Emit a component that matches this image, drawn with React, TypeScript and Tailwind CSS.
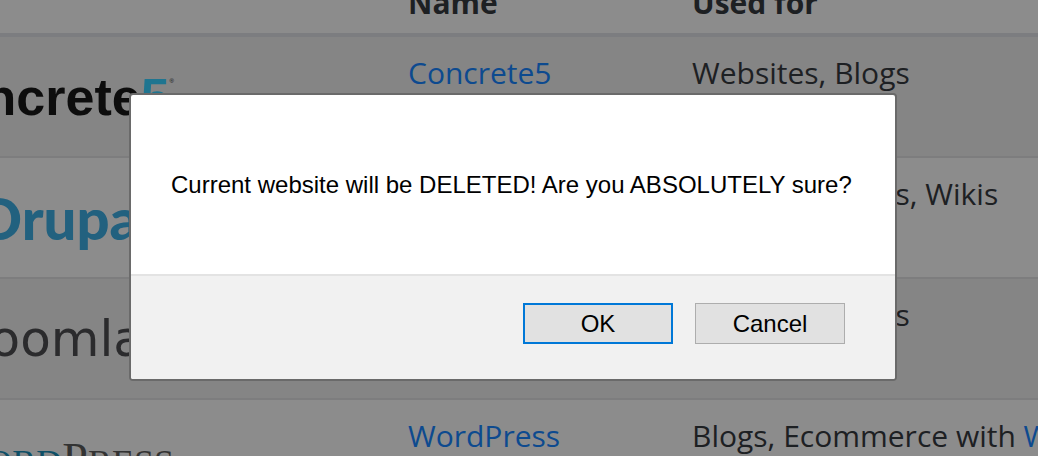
import type { ReactNode } from "react";

type Row = { id: string; logo: ReactNode; name: string; uses: ReactNode };

const linkClass = "text-[#0d4a8f]";

const rows: Row[] = [
  {
    id: "concrete5",
    logo: (
      <span className="flex w-[174px] justify-end font-['Liberation_Sans',sans-serif] text-[52px] font-bold text-[#0d0d0d]">
        <span>concrete</span>
        <span className="text-[#1f7590]">5</span>
        <span className="text-[6px] leading-7 font-normal">®</span>
      </span>
    ),
    name: "Concrete5",
    uses: "Websites, Blogs",
  },
  {
    id: "drupal",
    logo: (
      <span className="flex w-[154px] justify-end font-['Lato',sans-serif] text-[58px] font-black text-[#22617f]">
        Drupal
      </span>
    ),
    name: "Drupal",
    uses: "Websites, Blogs, Wikis",
  },
  {
    id: "joomla",
    logo: (
      <span className="flex w-[144px] justify-end font-['DejaVu_Sans',sans-serif] text-[50px] text-[#2b2b2d]">
        Joomla
      </span>
    ),
    name: "Joomla",
    uses: "Websites, Blogs",
  },
  {
    id: "wordpress",
    logo: (
      <span className="flex w-[174px] items-baseline justify-end pt-1 font-['Liberation_Serif',serif] text-[46px] text-[#333333]">
        <span className="text-[#0e4f66]">W</span>
        <span className="text-[36px] text-[#0e4f66]">ORD</span>
        <span>P</span>
        <span className="text-[36px]">RESS</span>
      </span>
    ),
    name: "WordPress",
    uses: (
      <>
        Blogs, Ecommerce with{" "}
        <a href="#woocommerce" className={linkClass}>
          WooCommerce
        </a>
      </>
    ),
  },
];

function SoftwareTable() {
  return (
    <table className="-mt-[35px] w-full table-fixed border-separate border-spacing-0 text-left text-[30px] leading-[48px] whitespace-nowrap text-[#1d2023]">
      <colgroup>
        <col className="w-[384px]" />
        <col className="w-[284px]" />
        <col />
      </colgroup>
      <thead>
        <tr>
          <th aria-label="Logo" className="border-b-4 border-[#7c7d80]" />
          <th className="border-b-4 border-[#7c7d80] px-6 pt-[14px] pb-[6px] font-bold">Name</th>
          <th className="border-b-4 border-[#7c7d80] px-6 pt-[14px] pb-[6px] font-bold">Used for</th>
        </tr>
      </thead>
      <tbody>
        {rows.map((row) => (
          <tr key={row.id} className="align-top odd:bg-[#858585]">
            <td className="border-b-2 border-[#7d7d7e] p-0">
              <div className="flex h-[119px] items-center leading-[60px]">{row.logo}</div>
            </td>
            <td className="border-b-2 border-[#7d7d7e] px-6 py-3">
              <a href={`#${row.id}`} className={linkClass}>
                {row.name}
              </a>
            </td>
            <td className="border-b-2 border-[#7d7d7e] px-6 py-3">{row.uses}</td>
          </tr>
        ))}
      </tbody>
    </table>
  );
}

function ConfirmDialog() {
  return (
    <div className="fixed inset-0 flex items-start justify-center pt-[93px] pr-3">
      <div
        role="alertdialog"
        aria-modal="true"
        aria-labelledby="confirm-message"
        className="w-[768px] max-w-full overflow-hidden rounded-[4px] border-2 border-[#6a6a6a] bg-white font-['Liberation_Sans',Arial,sans-serif] text-[24px] leading-8 text-black"
      >
        <p id="confirm-message" className="px-10 pt-[74px] pb-[73px]">
          Current website will be DELETED! Are you ABSOLUTELY sure?
        </p>
        <div className="flex justify-end gap-[22px] border-t-2 border-[#e3e3e3] bg-[#f1f1f1] pt-[27px] pr-[50px] pb-[35px]">
          <button type="button" className="h-[41px] w-[150px] border-2 border-[#0078d7] bg-[#e1e1e1]">
            OK
          </button>
          <button type="button" className="h-[41px] w-[150px] border border-[#adadad] bg-[#e1e1e1]">
            Cancel
          </button>
        </div>
      </div>
    </div>
  );
}

export default function App() {
  return (
    <main className="flow-root h-screen overflow-hidden bg-[#8c8c8c] font-['Open_Sans','Noto_Sans',sans-serif]">
      <SoftwareTable />
      <ConfirmDialog />
    </main>
  );
}
